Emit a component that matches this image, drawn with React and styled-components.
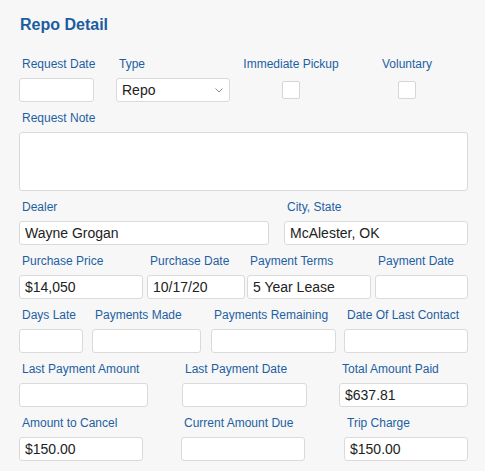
import React from 'react'
import styled, { createGlobalStyle } from 'styled-components'

const GlobalStyle = createGlobalStyle`
  html, body {
    margin: 0;
    padding: 0;
    background: #f7f7f7;
  }
  body {
    font-family: "Liberation Sans", Arial, sans-serif;
  }
`

const Panel = styled.div`
  width: 485px;
  height: 471px;
  box-sizing: border-box;
  padding: 15px 0 0 19px;
  background: #f7f7f7;
`

const Title = styled.h2`
  margin: 0 0 23px 1px;
  font-size: 16px;
  line-height: 19px;
  font-weight: bold;
  color: #1b5d9e;
`

const Row = styled.div`
  display: flex;
  align-items: flex-start;
  margin-bottom: ${p => p.$mb || 9}px;
`

const Field = styled.div`
  display: flex;
  flex-direction: column;
  width: ${p => p.$w}px;
  margin-left: ${p => p.$ml || 0}px;
  align-items: ${p => (p.$center ? 'center' : 'stretch')};
`

const Label = styled.label`
  display: block;
  font-size: 12px;
  line-height: 14px;
  color: #1e5fa2;
  padding-left: ${p => (p.$center ? 0 : 3)}px;
  margin-bottom: 7px;
  white-space: nowrap;
`

const Input = styled.input`
  box-sizing: border-box;
  width: 100%;
  height: 24px;
  margin: 0;
  padding: 0 5px;
  border: 1px solid #dadada;
  border-radius: 3px;
  background: #fff;
  font-family: "Liberation Sans", Arial, sans-serif;
  font-size: 14px;
  color: #222;
  outline: none;
`

const NoteArea = styled.textarea`
  box-sizing: border-box;
  width: 100%;
  height: 59px;
  margin: 0;
  border: 1px solid #dadada;
  border-radius: 3px;
  background: #fff;
  resize: none;
  outline: none;
`

const SelectWrap = styled.div`
  position: relative;
  width: 100%;
`

const Select = styled.select`
  box-sizing: border-box;
  width: 100%;
  height: 24px;
  margin: 0;
  padding: 0 5px;
  border: 1px solid #dadada;
  border-radius: 3px;
  background: #fff;
  font-family: "Liberation Sans", Arial, sans-serif;
  font-size: 14px;
  color: #222;
  appearance: none;
  outline: none;
`

const Chevron = styled.svg`
  position: absolute;
  right: 7px;
  top: 10px;
  pointer-events: none;
`

const Checkbox = styled.span`
  display: block;
  box-sizing: border-box;
  width: 18px;
  height: 18px;
  margin-top: 3px;
  border: 1px solid #d6d6d6;
  border-radius: 2px;
  background: #fff;
`

const TextField = ({ label, w, ml, value = '' }) => (
  <Field $w={w} $ml={ml}>
    <Label>{label}</Label>
    <Input value={value} readOnly />
  </Field>
)

const CheckField = ({ label, w, ml }) => (
  <Field $w={w} $ml={ml} $center>
    <Label $center>{label}</Label>
    <Checkbox />
  </Field>
)

const App = () => (
  <Panel>
    <GlobalStyle />
    <Title>Repo Detail</Title>

    <Row>
      <TextField label="Request Date" w={75} />
      <Field $w={114} $ml={22}>
        <Label>Type</Label>
        <SelectWrap>
          <Select defaultValue="Repo">
            <option>Repo</option>
            <option>Transport</option>
          </Select>
          <Chevron width="8" height="5" viewBox="0 0 8 5">
            <path d="M0.5 0.5 L4 4 L7.5 0.5" fill="none" stroke="#8a8a8a" strokeWidth="1" />
          </Chevron>
        </SelectWrap>
      </Field>
      <CheckField label="Immediate Pickup" w={96} ml={13} />
      <CheckField label="Voluntary" w={50} ml={43} />
    </Row>

    <Row>
      <Field $w={449}>
        <Label>Request Note</Label>
        <NoteArea readOnly />
      </Field>
    </Row>

    <Row>
      <TextField label="Dealer" w={250} value="Wayne Grogan" />
      <TextField label="City, State" w={184} ml={15} value="McAlester, OK" />
    </Row>

    <Row>
      <TextField label="Purchase Price" w={124} value="$14,050" />
      <TextField label="Purchase Date" w={98} ml={4} value="10/17/20" />
      <TextField label="Payment Terms" w={124} ml={2} value="5 Year Lease" />
      <TextField label="Payment Date" w={93} ml={4} />
    </Row>

    <Row>
      <TextField label="Days Late" w={64} />
      <TextField label="Payments Made" w={109} ml={9} />
      <TextField label="Payments Remaining" w={125} ml={10} />
      <TextField label="Date Of Last Contact" w={124} ml={8} />
    </Row>

    <Row>
      <TextField label="Last Payment Amount" w={129} />
      <TextField label="Last Payment Date" w={125} ml={34} />
      <TextField label="Total Amount Paid" w={129} ml={32} value="$637.81" />
    </Row>

    <Row>
      <TextField label="Amount to Cancel" w={124} value="$150.00" />
      <TextField label="Current Amount Due" w={124} ml={38} />
      <TextField label="Trip Charge" w={124} ml={39} value="$150.00" />
    </Row>
  </Panel>
)

export default App
